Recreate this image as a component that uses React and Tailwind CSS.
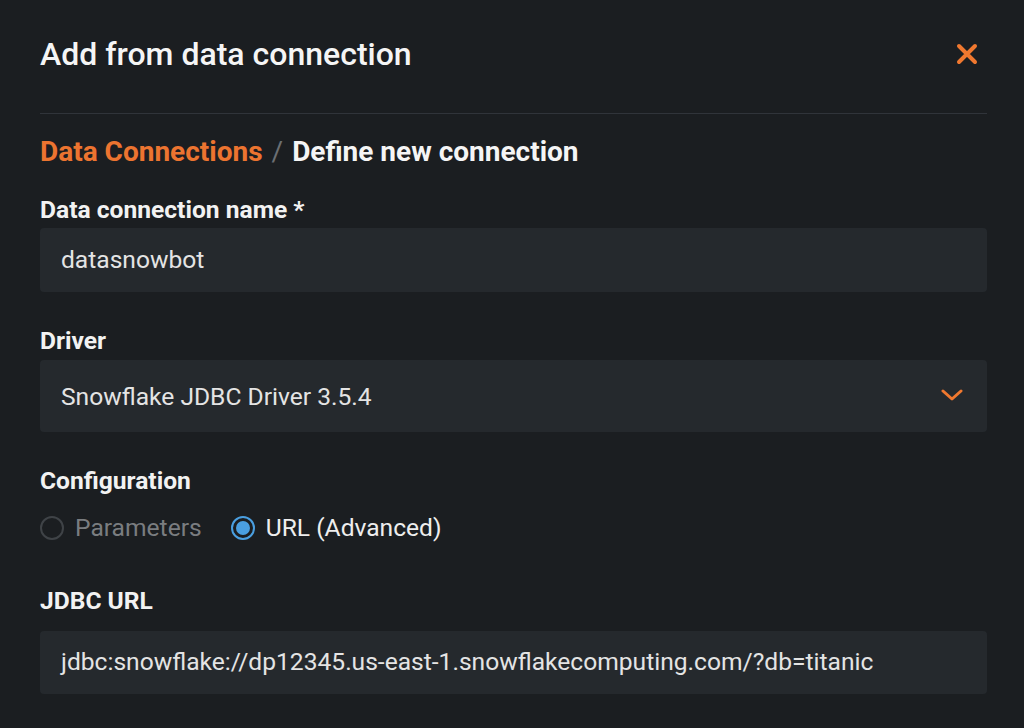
import { useState } from 'react';

function Field({ label, children, className = '' }) {
  return (
    <div className={className}>
      <div className="text-[24.6px] font-bold text-[#f2f2f2] leading-[26px]">{label}</div>
      {children}
    </div>
  );
}

function Radio({ checked, label, onClick }) {
  return (
    <button type="button" onClick={onClick} className="flex items-center gap-[11px] h-[28px]">
      <span
        className={
          checked
            ? 'w-6 h-6 rounded-full border-2 border-[#4a9fe0] flex items-center justify-center'
            : 'w-6 h-6 rounded-full border-2 border-[#3f4347]'
        }
      >
        {checked && <span className="w-[14px] h-[14px] rounded-full bg-[#4a9fe0]" />}
      </span>
      <span className={checked ? 'text-[24.6px] text-[#eeeeee]' : 'text-[24.6px] text-[#7a7d80]'}>{label}</span>
    </button>
  );
}

export default function App() {
  const [mode, setMode] = useState('url');

  return (
    <div className="w-[1024px] h-[728px] overflow-hidden bg-[#1b1e21] text-white font-['Roboto',sans-serif] pl-10 pr-[37px]">
      <div className="flex items-center justify-between h-[114px] border-b border-[#30343a]">
        <h1 className="text-[32px] font-medium text-[#f5f5f5] -mt-[6px]">Add from data connection</h1>
        <svg width="22" height="22" viewBox="0 0 22 22" className="mr-[9px] -mt-[6px]">
          <path d="M3 3 L19 19 M19 3 L3 19" stroke="#f0782f" strokeWidth="4" strokeLinecap="round" />
        </svg>
      </div>

      <div className="mt-[23px] text-[28px] font-bold leading-[30px] flex items-center gap-[9px]">
        <span className="text-[#ec7430]">Data Connections</span>
        <span className="text-[#6b6f73] font-normal">/</span>
        <span className="text-[#f5f5f5]">Define new connection</span>
      </div>

      <Field label="Data connection name *" className="mt-[30px]">
        <div className="mt-[5px] h-[64px] rounded bg-[#25292d] flex items-center px-[21px] text-[24.6px] text-[#e4e4e4]">
          datasnowbot
        </div>
      </Field>

      <Field label="Driver" className="mt-[36px]">
        <div className="mt-[6px] h-[72px] rounded bg-[#25292d] flex items-center justify-between pl-[21px] pr-[24px] text-[24.6px] text-[#e4e4e4]">
          <span className="mt-[2px]">Snowflake JDBC Driver 3.5.4</span>
          <svg width="22" height="14" viewBox="0 0 22 14" className="-mt-[2px]">
            <path d="M2 3 L11 11 L20 3" stroke="#f0782f" strokeWidth="3" fill="none" strokeLinecap="round" strokeLinejoin="round" />
          </svg>
        </div>
      </Field>

      <Field label="Configuration" className="mt-[36px]">
        <div className="mt-[20px] flex items-center gap-[29px]">
          <Radio checked={mode === 'params'} label="Parameters" onClick={() => setMode('params')} />
          <Radio checked={mode === 'url'} label="URL (Advanced)" onClick={() => setMode('url')} />
        </div>
      </Field>

      <Field label="JDBC URL" className="mt-[46px]">
        <div className="mt-[17px] h-[63px] rounded bg-[#25292d] flex items-center px-[21px] text-[24.6px] text-[#e4e4e4]">
          jdbc:snowflake://dp12345.us-east-1.snowflakecomputing.com/?db=titanic
        </div>
      </Field>
    </div>
  );
}
